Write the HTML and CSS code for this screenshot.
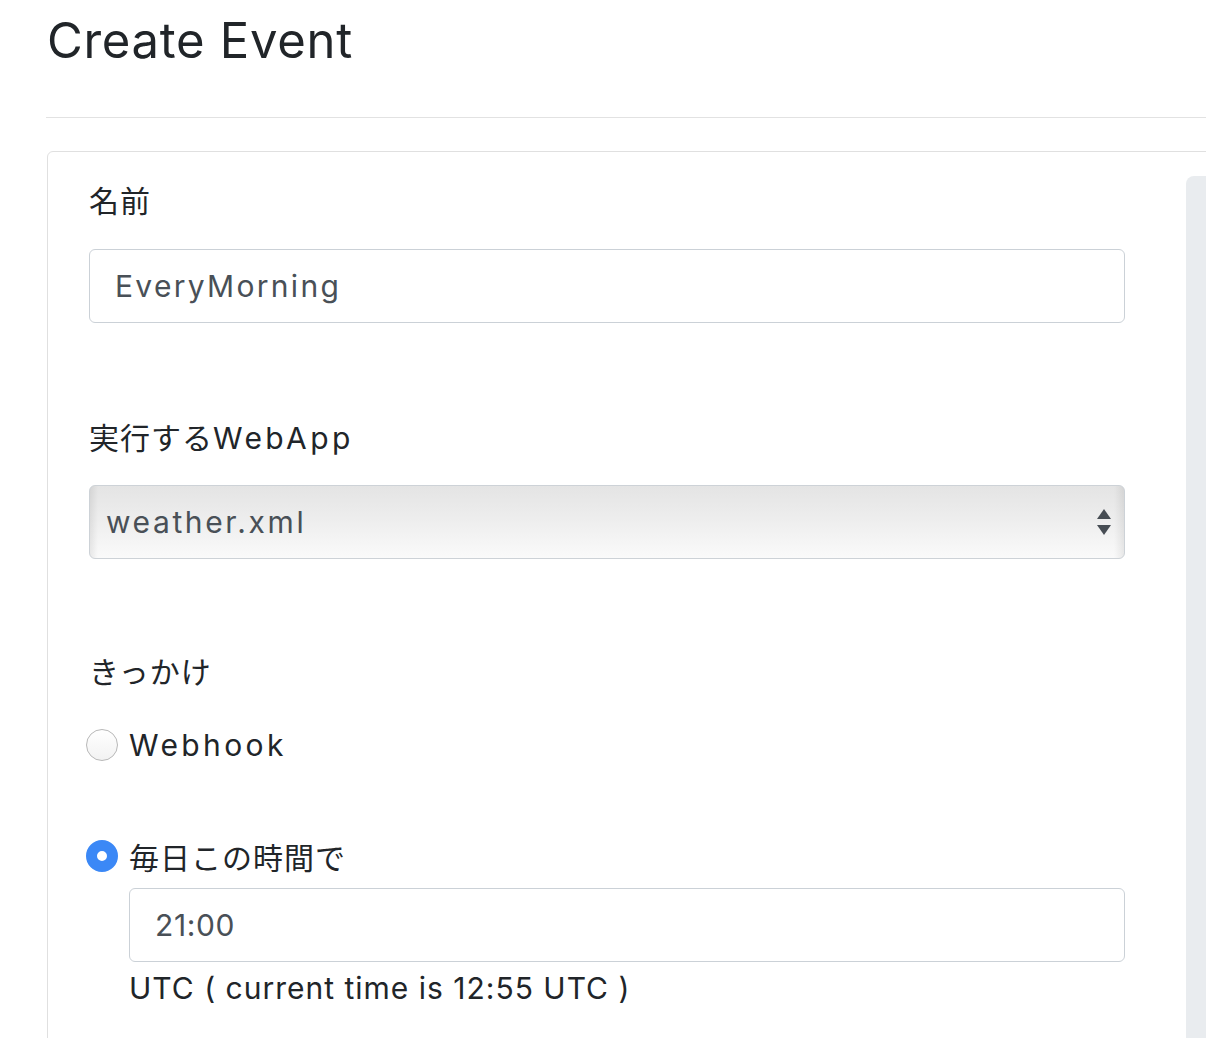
FILE: index.html
```html
<!DOCTYPE html>
<html lang="ja">
<head>
<meta charset="utf-8">
<title>Create Event</title>
<link rel="stylesheet" href="styles.css">
</head>
<body>
<div class="page">
  <h1 class="title">Create Event</h1>
  <hr class="rule">
  <div class="card">
    <form class="form">
      <label class="label">名前</label>
      <input class="input wide" type="text" value="EveryMorning">

      <label class="label label-gap">実行する<span class="lat">WebApp</span></label>
      <div class="select">
        <span class="select-value">weather.xml</span>
        <svg class="select-arrows" width="16" height="30" viewBox="0 0 16 30"><path d="M8 2 L15 12 L1 12 Z" fill="#474d54"/><path d="M1 18 L15 18 L8 28 Z" fill="#474d54"/></svg>
      </div>

      <label class="label label-gap last">きっかけ</label>
      <div class="radio-row first">
        <span class="radio"></span>
        <span class="radio-text lat">Webhook</span>
      </div>
      <div class="radio-row second">
        <span class="radio checked"></span>
        <span class="radio-text">毎日この時間で</span>
      </div>
      <div class="sub">
        <input class="input time" type="text" value="21:00">
        <div class="hint">UTC ( current time is 12:55 UTC )</div>
      </div>
    </form>
    <div class="side"></div>
  </div>
</div>
</body>
</html>
```

FILE: styles.css
```css
html, body {
  margin: 0;
  padding: 0;
  overflow: hidden;
  background: #ffffff;
}
body {
  font-family: "Inter", "Noto Sans CJK JP", sans-serif;
  color: #212529;
  width: 1206px;
  height: 1038px;
}
.page {
  padding-left: 46px;
  width: 1300px;
}
.title {
  font-size: 49px;
  font-weight: 400;
  line-height: 1.2;
  margin: 12px 0 0 1px;
  letter-spacing: 0.7px;
  color: #212529;
}
.rule {
  border: 0;
  border-top: 1px solid #e2e2e2;
  margin: 46px 0 0 0;
  height: 0;
}
.card {
  margin-top: 33px;
  margin-left: 1px;
  border: 1px solid #e0e0e0;
  border-radius: 6px;
  display: flex;
  height: 1000px;
}
.form {
  width: 1036px;
  padding: 28px 0 0 41px;
  display: flex;
  flex-direction: column;
  font-size: 30px;
  letter-spacing: 1px;
}
.lat {
  letter-spacing: 3.4px;
}
.label {
  line-height: 43px;
  height: 43px;
  color: #212529;
}
.label-gap {
  margin-top: 94px;
}
.label-gap.last {
  margin-top: 92px;
}
.input {
  box-sizing: border-box;
  height: 74px;
  margin-top: 26px;
  border: 1px solid #cbd1d7;
  border-radius: 6px;
  padding: 0 0 0 25px;
  font: inherit;
  letter-spacing: 2.3px;
  color: #495057;
  background: #fff;
  outline: none;
}
.input.time {
  letter-spacing: 0.6px;
}
.select {
  box-sizing: border-box;
  height: 74px;
  margin-top: 25px;
  border: 1px solid #cdd2d7;
  border-radius: 6px;
  display: flex;
  align-items: center;
  justify-content: space-between;
  padding: 0 12px 0 16px;
  background:
    linear-gradient(to right, rgba(0,0,0,0.07), rgba(0,0,0,0) 8px, rgba(0,0,0,0) calc(100% - 10px), rgba(0,0,0,0.07)),
    linear-gradient(to bottom, #e4e4e4, #ededed 45%, #fafafa);
}
.select-value {
  color: #495057;
  letter-spacing: 2.6px;
}
.select-arrows {
  display: block;
}
.radio-row {
  display: flex;
  align-items: center;
  gap: 11px;
  margin-left: -3px;
  height: 43px;
}
.radio-row.first {
  margin-top: 30px;
}
.radio-row.second {
  margin-top: 68px;
}
.radio {
  box-sizing: border-box;
  width: 32px;
  height: 32px;
  border-radius: 50%;
  border: 1px solid #b8b8b8;
  background: linear-gradient(to bottom, #ffffff, #f2f2f2);
  flex: none;
}
.radio.checked {
  border: 11px solid #3b88f6;
  background: #ffffff;
}
.radio-text {
  color: #212529;
}
.sub {
  margin-left: 40px;
  display: flex;
  flex-direction: column;
}
.sub .input {
  margin-top: 10px;
}
.hint {
  margin-top: 5px;
  line-height: 43px;
  color: #212529;
  letter-spacing: 1px;
}
.side {
  margin-left: 61px;
  margin-top: 24px;
  width: 100px;
  background: #e9ecef;
  border-radius: 8px 0 0 0;
}
```
